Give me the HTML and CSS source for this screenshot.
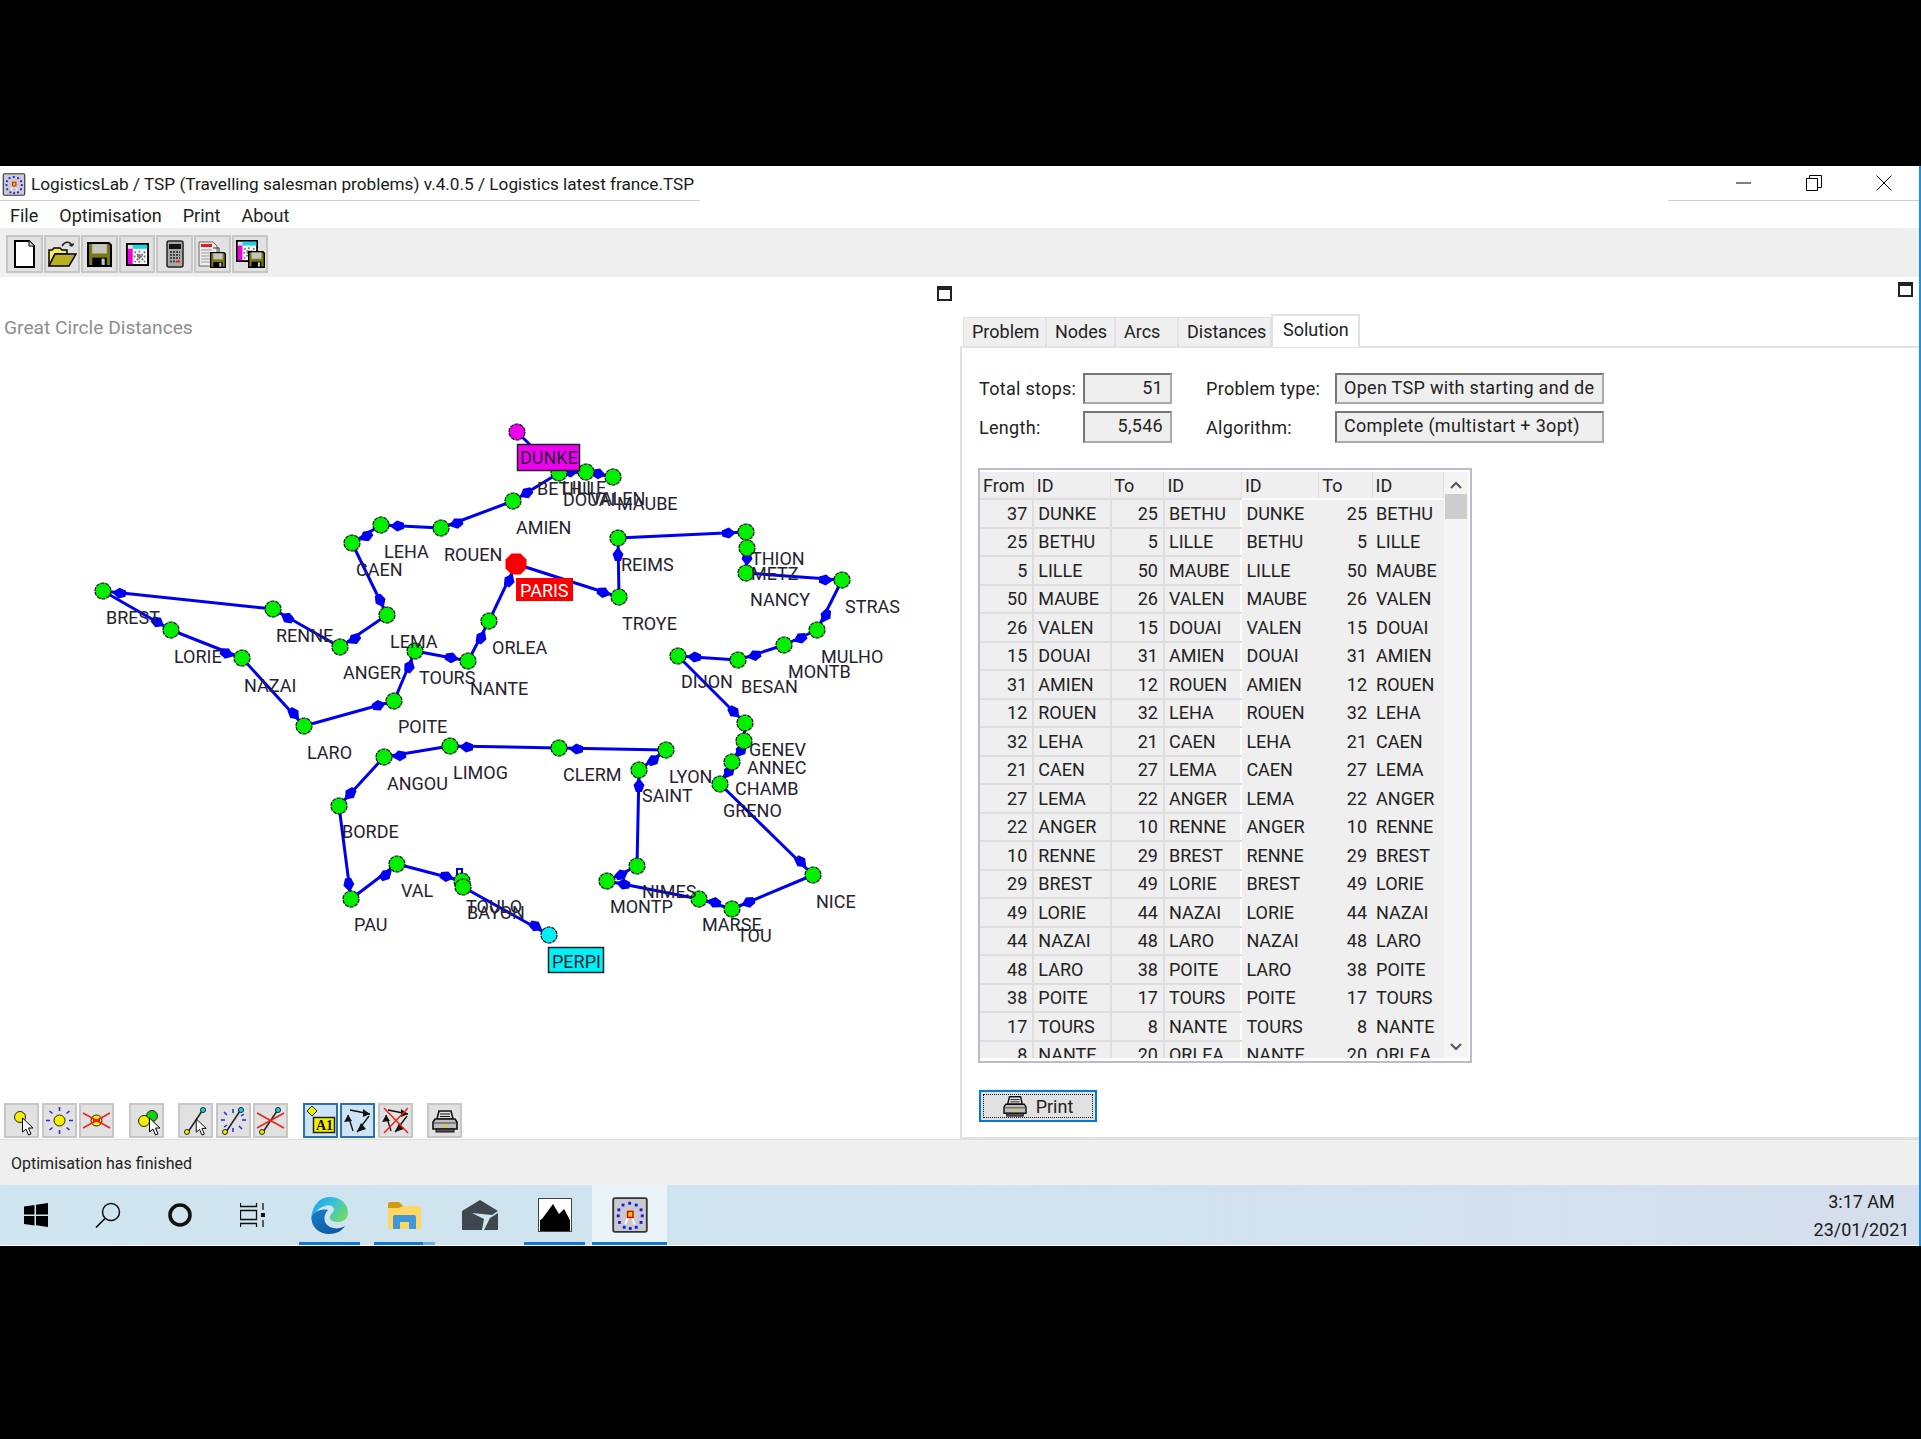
FILE: index.html
```html
<!DOCTYPE html>
<html lang="en">
<head>
    <meta charset="UTF-8">
    <title>LogisticsLab / TSP</title>
    <link rel="stylesheet" href="styles.css">
</head>
<body>
    <svg class="defs" width="0" height="0">
        <defs>
            <linearGradient id="edgeTop" x1="0" y1="0" x2="1" y2="0.6">
                <stop offset="0" stop-color="#1b9de2"/>
                <stop offset="0.5" stop-color="#33bfe0"/>
                <stop offset="1" stop-color="#6fd86c"/>
            </linearGradient>
            <linearGradient id="edgeLow" x1="0" y1="0" x2="1" y2="1">
                <stop offset="0" stop-color="#1a7fcc"/>
                <stop offset="1" stop-color="#0b4f98"/>
            </linearGradient>
            <symbol id="cursor" viewBox="0 0 12 19">
                <path d="M1 1V15L4.5 12L7 18L9.5 17L7 11H11.5Z" fill="#fff" stroke="#000" stroke-width="1"/>
            </symbol>
            <symbol id="floppy" viewBox="0 0 24 24">
                <path d="M1 1H21L23 3V23H1Z" fill="#7a7a10" stroke="#000" stroke-width="2"/>
                <rect x="5" y="2" width="14" height="9" fill="#c4c4c4"/>
                <rect x="5" y="15" width="14" height="8" fill="#000"/>
                <rect x="14" y="16" width="3" height="6" fill="#c4c4c4"/>
            </symbol>
            <symbol id="sheet" viewBox="0 0 24 24">
                <rect x="1" y="1" width="22" height="22" fill="#fff" stroke="#000" stroke-width="2"/>
                <rect x="2" y="2" width="20" height="4" fill="#e0e0e0"/>
                <rect x="7" y="2" width="15" height="4" fill="#12d8e8"/>
                <rect x="2" y="6" width="5" height="16" fill="#f000e0"/>
                <path d="M9 9L20 20M20 9L9 20M14 8V21M8 14H21" stroke="#777" stroke-width="2" stroke-dasharray="2 1.5"/>
            </symbol>
            <symbol id="printer" viewBox="0 0 26 24">
                <path d="M7 2H19L21 10H5Z" fill="#e6e6e6" stroke="#111" stroke-width="1.6"/>
                <path d="M8 5H18M8 7.500H18" stroke="#111"/>
                <path d="M3 10H23L25 13V20H1V13Z" fill="#bdbdbd" stroke="#111" stroke-width="1.6"/>
                <path d="M2 14H24" stroke="#444"/>
                <rect x="4" y="20" width="18" height="3" fill="#555" stroke="#111"/>
                <rect x="11" y="16" width="5" height="1.600" fill="#e6d200"/>
            </symbol>
            <symbol id="app" viewBox="0 0 30 30">
                <rect x="1" y="1" width="28" height="28" rx="1.500" fill="#c9c9cf" stroke="#333" stroke-width="1.500"/>
                <g fill="#1a1ae6">
                    <rect x="13.500" y="4" width="2.400" height="2.400"/><rect x="19" y="5.500" width="2.400" height="2.400"/>
                    <rect x="8" y="5.500" width="2.400" height="2.400"/><rect x="4.500" y="9.500" width="2.400" height="2.400"/>
                    <rect x="23" y="9.500" width="2.400" height="2.400"/><rect x="4" y="14.500" width="2.400" height="2.400"/>
                    <rect x="24" y="14.500" width="2.400" height="2.400"/><rect x="5" y="20" width="2.400" height="2.400"/>
                    <rect x="23" y="20" width="2.400" height="2.400"/><rect x="9" y="24" width="2.400" height="2.400"/>
                    <rect x="14" y="25" width="2.400" height="2.400"/><rect x="19" y="24" width="2.400" height="2.400"/>
                </g>
                <path d="M11 23L14 15M19 23L16 15" stroke="#fff" stroke-width="1.500"/>
                <rect x="13" y="12" width="4.500" height="5" fill="#f0d000" stroke="#e00000" stroke-width="1.200"/>
            </symbol>
            <path id="arrow" d="M-8 -3L-1 -5.500L6 0L-1 5.500L-8 3Z" fill="#0000f0"/>
        </defs>
    </svg>

    <div class="window">
        <div class="titlebar">
            <div class="title">
                <svg class="title-icon" width="24" height="23"><use href="#app"/></svg>
                <span>LogisticsLab / TSP (Travelling salesman problems) v.4.0.5 / Logistics latest france.TSP</span>
            </div>
            <div class="title-space"></div>
            <div class="controls">
                <div class="control"><svg width="16" height="16"><path d="M0 8H15" stroke="#000" fill="none"/></svg></div>
                <div class="control"><svg width="16" height="16"><path d="M.5 3.500H11.500V15.500H.5ZM3.500 3.500V.5H15.500V12.500H11.500" stroke="#000" fill="none"/></svg></div>
                <div class="control"><svg width="16" height="16"><path d="M.5 .5L15.500 15.500M15.500 .5L.5 15.500" stroke="#000" fill="none"/></svg></div>
            </div>
        </div>

        <div class="menubar">
            <span>File</span><span>Optimisation</span><span>Print</span><span>About</span>
        </div>

        <div class="toolbar">
            <div class="tool"><svg width="28" height="30" viewBox="0 0 28 30"><path d="M5 2H19L24 7V28H5Z" fill="#fff" stroke="#000" stroke-width="2"/><path d="M19 2V7H24" fill="#ddd" stroke="#000"/></svg></div>
            <div class="tool"><svg width="30" height="28" viewBox="0 0 30 28"><path d="M2 26V10H5L7 8H13L15 10H20V14H8L2 26" fill="#f0ee60" stroke="#000" stroke-width="1.500"/><path d="M2 26L8 14H29L22 26Z" fill="#b8b020" stroke="#000" stroke-width="1.500"/><path d="M15 6C18 1 23 1 25 6M25 6L22.500 5M25 6L26.500 3.500" fill="none" stroke="#222" stroke-width="1.500"/></svg></div>
            <div class="tool"><svg width="25" height="25"><use href="#floppy"/></svg></div>
            <div class="tool"><svg width="23" height="23"><use href="#sheet"/></svg></div>
            <div class="tool"><svg width="18" height="28" viewBox="0 0 18 28"><rect x="1" y="1" width="16" height="26" rx="2" fill="#a8a8a8" stroke="#222" stroke-width="1.500"/><rect x="3" y="4" width="12" height="5" fill="#111"/><path d="M4 12H14M4 15H14M4 18H14M4 21.500H10" stroke="#444" stroke-width="1.800" stroke-dasharray="2 1"/><rect x="10" y="20.500" width="4" height="2" fill="#e02020"/></svg></div>
            <div class="tool tool-stack"><svg width="30" height="28" viewBox="0 0 30 28"><path d="M2 2H16L20 6V26H2Z" fill="#eee" stroke="#666"/><rect x="4" y="4" width="11" height="3" fill="#f01818"/><path d="M4 10H15M4 13H13M4 16H13M4 19H13M4 22H13" stroke="#999"/><path d="M16 8H22V14" fill="none" stroke="#333"/><use href="#floppy" x="13" y="12" width="16" height="16"/></svg></div>
            <div class="tool tool-stack"><svg width="30" height="30" viewBox="0 0 30 30"><use href="#sheet" x="1" y="1" width="22" height="22"/><use href="#floppy" x="13" y="12" width="17" height="17"/></svg></div>
        </div>

        <div class="main">
            <div class="map-pane">
                <div class="max-box max-left"></div>
                <div class="map-caption">Great Circle Distances</div>

                <svg class="map" width="960" height="755" viewBox="0 340 960 755">
                    <polyline class="route" points="517,432 559,473 586,472 613,477 586,472 559,473 513,501 441,528 381,525 352,543 387,615 340,647 273,609 103,591 171,630 242,658 304,726 394,701 415,651 468,661 489,621 516,564 619,597 618,538 746,532 747,548 746,573 842,580 817,630 784,645 738,660 678,656 745,723 744,741 732,762 720,784 813,875 732,909 699,899 607,881 637,866 639,770 666,750 559,748 450,746 384,757 339,806 351,899 397,864 462,881 463,887 549,935"/>
                    <path class="route-thin" d="M457 876V869H462V876"/>

                    <use href="#arrow" transform="translate(572 472)"/>
                    <use href="#arrow" transform="translate(600 474) rotate(10)"/>
                    <use href="#arrow" transform="translate(525 494) rotate(149)"/>
                    <use href="#arrow" transform="translate(455 524) rotate(160)"/>
                    <use href="#arrow" transform="translate(396 526) rotate(178)"/>
                    <use href="#arrow" transform="translate(365 537) rotate(148)"/>
                    <use href="#arrow" transform="translate(381 602) rotate(64)"/>
                    <use href="#arrow" transform="translate(353 640) rotate(146)"/>
                    <use href="#arrow" transform="translate(286 617) rotate(210)"/>
                    <use href="#arrow" transform="translate(118 593) rotate(186)"/>
                    <use href="#arrow" transform="translate(159 623) rotate(30)"/>
                    <use href="#arrow" transform="translate(228 654) rotate(22)"/>
                    <use href="#arrow" transform="translate(295 715) rotate(48)"/>
                    <use href="#arrow" transform="translate(380 705) rotate(-16)"/>
                    <use href="#arrow" transform="translate(410 665) rotate(-68)"/>
                    <use href="#arrow" transform="translate(453 658) rotate(11)"/>
                    <use href="#arrow" transform="translate(482 636) rotate(-62)"/>
                    <use href="#arrow" transform="translate(510 579) rotate(-65)"/>
                    <use href="#arrow" transform="translate(605 593) rotate(18)"/>
                    <use href="#arrow" transform="translate(618 553) rotate(-90)"/>
                    <use href="#arrow" transform="translate(730 533) rotate(-3)"/>
                    <use href="#arrow" transform="translate(747 560) rotate(90)"/>
                    <use href="#arrow" transform="translate(827 580) rotate(4)"/>
                    <use href="#arrow" transform="translate(825 617) rotate(116)"/>
                    <use href="#arrow" transform="translate(799 639) rotate(156)"/>
                    <use href="#arrow" transform="translate(753 656) rotate(162)"/>
                    <use href="#arrow" transform="translate(693 657) rotate(184)"/>
                    <use href="#arrow" transform="translate(735 713) rotate(45)"/>
                    <use href="#arrow" transform="translate(740 752) rotate(120)"/>
                    <use href="#arrow" transform="translate(728 773) rotate(120)"/>
                    <use href="#arrow" transform="translate(802 863) rotate(44)"/>
                    <use href="#arrow" transform="translate(747 903) rotate(157)"/>
                    <use href="#arrow" transform="translate(713 902) rotate(197)"/>
                    <use href="#arrow" transform="translate(622 884) rotate(191)"/>
                    <use href="#arrow" transform="translate(623 874) rotate(-27)"/>
                    <use href="#arrow" transform="translate(639 784) rotate(-89)"/>
                    <use href="#arrow" transform="translate(655 759) rotate(-37)"/>
                    <use href="#arrow" transform="translate(575 749) rotate(181)"/>
                    <use href="#arrow" transform="translate(465 747) rotate(181)"/>
                    <use href="#arrow" transform="translate(398 756) rotate(170)"/>
                    <use href="#arrow" transform="translate(349 795) rotate(132)"/>
                    <use href="#arrow" transform="translate(349 886) rotate(83)"/>
                    <use href="#arrow" transform="translate(387 874) rotate(-37)"/>
                    <use href="#arrow" transform="translate(448 877) rotate(15)"/>
                    <use href="#arrow" transform="translate(537 927) rotate(29)"/>

                    <g class="nodes">
                        <circle cx="559" cy="473" r="8"/><circle cx="586" cy="472" r="8"/><circle cx="613" cy="477" r="8"/>
                        <circle cx="513" cy="501" r="8"/><circle cx="441" cy="528" r="8"/><circle cx="381" cy="525" r="8"/>
                        <circle cx="352" cy="543" r="8"/><circle cx="387" cy="615" r="8"/><circle cx="340" cy="647" r="8"/>
                        <circle cx="273" cy="609" r="8"/><circle cx="103" cy="591" r="8"/><circle cx="171" cy="630" r="8"/>
                        <circle cx="242" cy="658" r="8"/><circle cx="304" cy="726" r="8"/><circle cx="394" cy="701" r="8"/>
                        <circle cx="415" cy="651" r="8"/><circle cx="468" cy="661" r="8"/><circle cx="489" cy="621" r="8"/>
                        <circle cx="619" cy="597" r="8"/><circle cx="618" cy="538" r="8"/><circle cx="746" cy="532" r="8"/>
                        <circle cx="747" cy="548" r="8"/><circle cx="746" cy="573" r="8"/><circle cx="842" cy="580" r="8"/>
                        <circle cx="817" cy="630" r="8"/><circle cx="784" cy="645" r="8"/><circle cx="738" cy="660" r="8"/>
                        <circle cx="678" cy="656" r="8"/><circle cx="745" cy="723" r="8"/><circle cx="744" cy="741" r="8"/>
                        <circle cx="732" cy="762" r="8"/><circle cx="720" cy="784" r="8"/><circle cx="813" cy="875" r="8"/>
                        <circle cx="732" cy="909" r="8"/><circle cx="699" cy="899" r="8"/><circle cx="607" cy="881" r="8"/>
                        <circle cx="637" cy="866" r="8"/><circle cx="639" cy="770" r="8"/><circle cx="666" cy="750" r="8"/>
                        <circle cx="559" cy="748" r="8"/><circle cx="450" cy="746" r="8"/><circle cx="384" cy="757" r="8"/>
                        <circle cx="339" cy="806" r="8"/><circle cx="351" cy="899" r="8"/><circle cx="397" cy="864" r="8"/>
                        <circle cx="462" cy="881" r="8"/><circle cx="463" cy="887" r="8"/>
                    </g>
                    <circle class="node-start" cx="517" cy="432" r="8"/>
                    <circle class="node-end" cx="549" cy="935" r="8"/>
                    <polygon class="node-depot" points="511.500,553.500 520.500,553.500 526.500,559.500 526.500,568.500 520.500,574.500 511.500,574.500 505.500,568.500 505.500,559.500"/>

                    <g class="labels">
                        <text x="106" y="624">BREST</text><text x="276" y="642">RENNE</text><text x="384" y="558">LEHA</text>
                        <text x="356" y="576">CAEN</text><text x="444" y="561">ROUEN</text><text x="174" y="663">LORIE</text>
                        <text x="244" y="692">NAZAI</text><text x="390" y="648">LEMA</text><text x="343" y="679">ANGER</text>
                        <text x="419" y="684">TOURS</text><text x="470" y="695">NANTE</text><text x="398" y="733">POITE</text>
                        <text x="307" y="759">LARO</text><text x="537" y="495">BETHU</text><text x="562" y="494">LILLE</text>
                        <text x="563" y="506">DOUAI</text><text x="590" y="505">VALEN</text><text x="617" y="510">MAUBE</text>
                        <text x="516" y="534">AMIEN</text><text x="621" y="571">REIMS</text><text x="751" y="565">THION</text>
                        <text x="751" y="580">METZ</text><text x="750" y="606">NANCY</text><text x="845" y="613">STRAS</text>
                        <text x="622" y="630">TROYE</text><text x="492" y="654">ORLEA</text><text x="821" y="663">MULHO</text>
                        <text x="788" y="678">MONTB</text><text x="741" y="693">BESAN</text><text x="681" y="688">DIJON</text>
                        <text x="749" y="756">GENEV</text><text x="453" y="779">LIMOG</text><text x="387" y="790">ANGOU</text>
                        <text x="563" y="781">CLERM</text><text x="342" y="838">BORDE</text><text x="642" y="802">SAINT</text>
                        <text x="669" y="783">LYON</text><text x="723" y="817">GRENO</text><text x="401" y="897">VAL</text>
                        <text x="354" y="931">PAU</text><text x="466" y="913">TOULO</text><text x="467" y="919">BAYON</text>
                        <text x="642" y="898">NIMES</text><text x="610" y="913">MONTP</text><text x="702" y="931">MARSE</text>
                        <text x="747" y="774">ANNEC</text><text x="735" y="795">CHAMB</text><text x="816" y="908">NICE</text>
                        <text x="737" y="942">TOU</text>
                    </g>

                    <rect class="box-start" x="517.500" y="444.500" width="62" height="26"/>
                    <text class="box-text" x="520" y="464">DUNKE</text>
                    <rect class="box-depot" x="516" y="578" width="57" height="23"/>
                    <text class="box-text box-text-light" x="520" y="597">PARIS</text>
                    <rect class="box-end" x="548.500" y="947.500" width="55" height="25"/>
                    <text class="box-text" x="552" y="968">PERPI</text>
                </svg>

                <div class="map-tools">
                    <div class="map-group">
                        <div class="tool tool-small"><svg width="31" height="31" viewBox="0 0 31 31"><circle cx="14" cy="12" r="5.500" fill="#f4ee00" stroke="#222"/><use href="#cursor" x="15" y="12" width="13" height="19"/></svg></div>
                        <div class="tool tool-small"><svg width="31" height="31" viewBox="0 0 31 31"><circle cx="15.500" cy="15.500" r="5.500" fill="#f4ee00" stroke="#222"/><path d="M15.500 2V6M15.500 25V29M2 15.500H6M25 15.500H29M5.500 6L8.500 8.500M22.500 22.500L25.500 25M25.500 6L22.500 8.500M8.500 22.500L5.500 25" stroke="#2020f0" stroke-width="1.500"/></svg></div>
                        <div class="tool tool-small"><svg width="31" height="31" viewBox="0 0 31 31"><circle cx="15.500" cy="15.500" r="5.500" fill="#f4ee00" stroke="#222"/><path d="M2 8L29 23M2 23L29 8" stroke="#f02020" stroke-width="1.500"/><rect x="12" y="14" width="7" height="3" fill="#f02020"/></svg></div>
                    </div>
                    <div class="map-group">
                        <div class="tool tool-small"><svg width="31" height="31" viewBox="0 0 31 31"><circle cx="21" cy="11" r="5.500" fill="#10d010" stroke="#222"/><circle cx="13" cy="16" r="5.500" fill="#f4ee00" stroke="#222"/><use href="#cursor" x="17" y="12" width="13" height="19"/></svg></div>
                    </div>
                    <div class="map-group">
                        <div class="tool tool-small"><svg width="31" height="31" viewBox="0 0 31 31"><path d="M8 27L22 6" stroke="#222" stroke-width="1.500"/><circle cx="7" cy="27" r="2.500" fill="#f4ee00" stroke="#222"/><circle cx="23" cy="5" r="2.500" fill="#10d8e8" stroke="#222"/><use href="#cursor" x="15" y="13" width="12" height="18"/></svg></div>
                        <div class="tool tool-small"><svg width="31" height="31" viewBox="0 0 31 31"><path d="M8 27L22 6" stroke="#222" stroke-width="1.500"/><circle cx="7" cy="27" r="2.500" fill="#f4ee00" stroke="#222"/><circle cx="23" cy="5" r="2.500" fill="#10d8e8" stroke="#222"/><path d="M15 4V8M15 23V27M3 15H7M24 15H28M6 7L9 10M21 21L24 24M26 9L23 11M9 20L6 22" stroke="#2020f0" stroke-width="1.500"/></svg></div>
                        <div class="tool tool-small"><svg width="31" height="31" viewBox="0 0 31 31"><path d="M8 27L22 6" stroke="#222" stroke-width="1.500"/><circle cx="7" cy="27" r="2.500" fill="#f4ee00" stroke="#222"/><circle cx="23" cy="5" r="2.500" fill="#10d8e8" stroke="#222"/><path d="M2 8L29 23M2 23L29 8" stroke="#f02020" stroke-width="1.500"/></svg></div>
                    </div>
                    <div class="map-group">
                        <div class="tool tool-small tool-on"><svg width="31" height="31" viewBox="0 0 31 31"><path d="M7 1L12 6L7 11L2 6Z" fill="#f4ee00" stroke="#222"/><rect x="8.500" y="12.500" width="21" height="15" fill="#f4ee00" stroke="#222" stroke-width="1.500"/><text class="icon-text" x="11" y="25">A1</text></svg></div>
                        <div class="tool tool-small tool-on"><svg width="31" height="31" viewBox="0 0 31 31"><path d="M8 5L28 9M27 11L15 27M11 26L6 10" stroke="#111" stroke-width="1.300"/><path d="M28 9L21 4V12ZM15 27L24 24L19 18ZM6 10L2 17L10 16Z" fill="#111"/></svg></div>
                        <div class="tool tool-small"><svg width="31" height="31" viewBox="0 0 31 31"><path d="M8 5L28 9M27 11L15 27M11 26L6 10" stroke="#111" stroke-width="1.300"/><path d="M28 9L21 4V12ZM15 27L24 24L19 18ZM6 10L2 17L10 16Z" fill="#111"/><path d="M4 3L28 28M28 3L4 28" stroke="#f02020" stroke-width="1.500"/></svg></div>
                    </div>
                    <div class="map-group">
                        <div class="tool tool-small"><svg width="26" height="24"><use href="#printer"/></svg></div>
                    </div>
                </div>
            </div>

            <div class="side-pane">
                <div class="max-box max-right"></div>
                <div class="tabs">
                    <div class="tab tab-problem">Problem</div>
                    <div class="tab tab-nodes">Nodes</div>
                    <div class="tab tab-arcs">Arcs</div>
                    <div class="tab tab-distances">Distances</div>
                    <div class="tab tab-active">Solution</div>
                </div>
                <div class="panel">
                    <div class="summary">
                        <label>Total stops:</label>
                        <div class="field field-num">51</div>
                        <label class="label-gap">Problem type:</label>
                        <div class="field"><span class="clip">Open TSP with starting and destination</span></div>
                        <label>Length:</label>
                        <div class="field field-num">5,546</div>
                        <label class="label-gap">Algorithm:</label>
                        <div class="field"><span class="clip">Complete (multistart + 3opt)</span></div>
                    </div>

                    <div class="grid-box">
                        <div class="grid-clip">
                            <table class="grid">
                                <colgroup>
                                    <col class="c-num"><col class="c-id"><col class="c-num"><col class="c-id"><col class="c-id"><col class="c-num"><col class="c-id2">
                                </colgroup>
                                <thead>
                                    <tr><th>From</th><th>ID</th><th>To</th><th>ID</th><th>ID</th><th>To</th><th>ID</th></tr>
                                </thead>
                                <tbody>
                                    <tr><td>37</td><td>DUNKE</td><td>25</td><td>BETHU</td><td>DUNKE</td><td>25</td><td>BETHU</td></tr>
                                    <tr><td>25</td><td>BETHU</td><td>5</td><td>LILLE</td><td>BETHU</td><td>5</td><td>LILLE</td></tr>
                                    <tr><td>5</td><td>LILLE</td><td>50</td><td>MAUBE</td><td>LILLE</td><td>50</td><td>MAUBE</td></tr>
                                    <tr><td>50</td><td>MAUBE</td><td>26</td><td>VALEN</td><td>MAUBE</td><td>26</td><td>VALEN</td></tr>
                                    <tr><td>26</td><td>VALEN</td><td>15</td><td>DOUAI</td><td>VALEN</td><td>15</td><td>DOUAI</td></tr>
                                    <tr><td>15</td><td>DOUAI</td><td>31</td><td>AMIEN</td><td>DOUAI</td><td>31</td><td>AMIEN</td></tr>
                                    <tr><td>31</td><td>AMIEN</td><td>12</td><td>ROUEN</td><td>AMIEN</td><td>12</td><td>ROUEN</td></tr>
                                    <tr><td>12</td><td>ROUEN</td><td>32</td><td>LEHA</td><td>ROUEN</td><td>32</td><td>LEHA</td></tr>
                                    <tr><td>32</td><td>LEHA</td><td>21</td><td>CAEN</td><td>LEHA</td><td>21</td><td>CAEN</td></tr>
                                    <tr><td>21</td><td>CAEN</td><td>27</td><td>LEMA</td><td>CAEN</td><td>27</td><td>LEMA</td></tr>
                                    <tr><td>27</td><td>LEMA</td><td>22</td><td>ANGER</td><td>LEMA</td><td>22</td><td>ANGER</td></tr>
                                    <tr><td>22</td><td>ANGER</td><td>10</td><td>RENNE</td><td>ANGER</td><td>10</td><td>RENNE</td></tr>
                                    <tr><td>10</td><td>RENNE</td><td>29</td><td>BREST</td><td>RENNE</td><td>29</td><td>BREST</td></tr>
                                    <tr><td>29</td><td>BREST</td><td>49</td><td>LORIE</td><td>BREST</td><td>49</td><td>LORIE</td></tr>
                                    <tr><td>49</td><td>LORIE</td><td>44</td><td>NAZAI</td><td>LORIE</td><td>44</td><td>NAZAI</td></tr>
                                    <tr><td>44</td><td>NAZAI</td><td>48</td><td>LARO</td><td>NAZAI</td><td>48</td><td>LARO</td></tr>
                                    <tr><td>48</td><td>LARO</td><td>38</td><td>POITE</td><td>LARO</td><td>38</td><td>POITE</td></tr>
                                    <tr><td>38</td><td>POITE</td><td>17</td><td>TOURS</td><td>POITE</td><td>17</td><td>TOURS</td></tr>
                                    <tr><td>17</td><td>TOURS</td><td>8</td><td>NANTE</td><td>TOURS</td><td>8</td><td>NANTE</td></tr>
                                    <tr><td>8</td><td>NANTE</td><td>20</td><td>ORLEA</td><td>NANTE</td><td>20</td><td>ORLEA</td></tr>
                                </tbody>
                            </table>
                        </div>
                        <div class="scroll">
                            <svg class="chevron" width="12" height="8"><path d="M1 7L6 2L11 7" fill="none" stroke="#555" stroke-width="2"/></svg>
                            <div class="thumb"></div>
                            <div class="scroll-space"></div>
                            <svg class="chevron" width="12" height="8"><path d="M1 1L6 6L11 1" fill="none" stroke="#555" stroke-width="2"/></svg>
                        </div>
                    </div>

                    <button class="print-btn"><span class="print-inner"><svg width="24" height="22"><use href="#printer"/></svg>Print</span></button>
                </div>
            </div>
        </div>

        <div class="statusbar">Optimisation has finished</div>

        <div class="taskbar">
            <div class="sys-slot"><svg width="24" height="24" viewBox="0 0 24 24"><path d="M0 3.500L10.500 2V11.500H0ZM12 1.800L24 0V11.500H12ZM0 13H10.500V22.500L0 21ZM12 13H24V24L12 22.300Z" fill="#000"/></svg></div>
            <div class="sys-slot"><svg width="26" height="26" viewBox="0 0 26 26"><circle cx="16" cy="10" r="8.500" fill="none" stroke="#111" stroke-width="1.500"/><path d="M10 16.500L1 25.500" stroke="#111" stroke-width="1.700"/></svg></div>
            <div class="sys-slot"><svg width="24" height="24" viewBox="0 0 24 24"><circle cx="12" cy="12" r="10" fill="none" stroke="#111" stroke-width="3.600"/></svg></div>
            <div class="sys-slot"><svg width="25" height="24" viewBox="0 0 25 24"><path d="M.5 0V3.500H16.500V0M.5 24V20.500H16.500V24M.5 7.500H16.500V16.500H.5ZM23 0V7M23 17V24" fill="none" stroke="#111" stroke-width="1.300"/><rect x="21" y="10" width="4" height="4" fill="#111"/></svg></div>

            <div class="app-slot on">
                <svg width="38" height="37" viewBox="0 0 38 37"><path d="M19 0C30 0 37 7 37 16C37 22 32 25 27 25C22 25 18 23 19 19C20 16 25 14 22 10C18 6 8 9 3 18C2 19 1 21 .5 23C0 10 8 0 19 0Z" fill="url(#edgeTop)"/><path d="M.5 20C0 30 8 37 18 37C25 37 31 34 34 29C29 32 24 32 19 30C12 27 12 18 17 13C9 11 2 16 .5 20Z" fill="url(#edgeLow)"/></svg>
            </div>
            <div class="app-slot on half">
                <svg width="33" height="27" viewBox="0 0 33 27"><path d="M0 2Q0 0 2 0H11L15 4H31Q33 4 33 6V25Q33 27 31 27H2Q0 27 0 25Z" fill="#ffd767"/><path d="M0 6V2Q0 0 2 0H11L15 4L11 6Z" fill="#d19a11"/><path d="M5 27V15Q5 13 7 13H26Q28 13 28 15V27H21V20H12V27Z" fill="#3f96d9"/></svg>
            </div>
            <div class="app-slot">
                <svg width="36" height="30" viewBox="0 0 36 30"><path d="M0 11L18 0L36 11L30 15L10 13L22 19L20 30H0ZM36 13V30H22L28 18Z" fill="#3e474d"/></svg>
            </div>
            <div class="app-slot on">
                <svg width="34" height="34" viewBox="0 0 34 34"><rect x=".5" y=".5" width="33" height="33" fill="#fff" stroke="#444"/><rect x="2" y="3" width="30" height="30" fill="#000"/><path d="M2 3H32V22L26 11L21 16L15 6L4 21L2 22Z" fill="#fff"/></svg>
            </div>
            <div class="app-slot on active">
                <svg width="36" height="36"><use href="#app"/></svg>
            </div>

            <div class="task-space"></div>
            <div class="clock">
                <div>3:17 AM</div>
                <div>23/01/2021</div>
            </div>
        </div>
    </div>
</body>
</html>
```

FILE: styles.css
```css
* {
    box-sizing: border-box;
}
body {
    margin: 0;
    background: #000;
    font-family: Roboto, "Noto Sans", sans-serif;
    font-size: 18px;
    color: #222;
}
.defs {
    position: absolute;
}
.window {
    margin-top: 166px;
    margin-bottom: 193px;
    height: 1080px;
    background: #fff;
    border-right: 2px solid #1c8fe0;
    display: flex;
    flex-direction: column;
}

/* title bar */
.titlebar {
    height: 35px;
    display: flex;
}
.title {
    width: 700px;
    display: flex;
    align-items: center;
    gap: 5px;
    padding: 2px 0 0 2px;
    border-bottom: 1px solid #d0d0d0;
    font-size: 17.200px;
    white-space: nowrap;
    color: #1a1a1a;
}
.title-space {
    width: 968px;
}
.controls {
    flex: 1;
    display: flex;
    justify-content: flex-end;
    align-items: flex-start;
    border-bottom: 1px solid #d0d0d0;
}
.control {
    width: 70px;
    height: 34px;
    display: flex;
    justify-content: center;
    padding-top: 9px;
}
.menubar {
    height: 27px;
    display: flex;
    align-items: center;
    gap: 21px;
    padding: 2px 0 0 10px;
    font-size: 18px;
}
.toolbar {
    height: 49px;
    background: #efefef;
    display: flex;
    align-items: center;
    gap: 1px;
    padding: 3px 0 0 6px;
}
.tool {
    width: 36.600px;
    height: 38px;
    background: #e1e1e1;
    border: 2px solid #c6c6c6;
    display: flex;
    align-items: center;
    justify-content: center;
}

/* main area */
.main {
    height: 862px;
    display: flex;
}
.map-pane {
    width: 960px;
    position: relative;
}
.max-box {
    position: absolute;
    width: 15px;
    height: 15px;
    border: 2px solid #222;
    border-top-width: 4px;
    background: #fff;
}
.max-left {
    left: 937px;
    top: 9px;
}
.max-right {
    right: 6px;
    top: 5px;
}
.map-caption {
    padding: 39px 0 0 4px;
    height: 63px;
    line-height: 24px;
    font-size: 19.200px;
    color: #8e8e8e;
}
.map {
    display: block;
}
.route {
    fill: none;
    stroke: #0000f0;
    stroke-width: 3;
    stroke-linejoin: round;
}
.route-thin {
    fill: none;
    stroke: #0000f0;
    stroke-width: 2;
}
.nodes circle {
    fill: #00f000;
}
.nodes circle, .node-start, .node-end {
    stroke: #111;
    stroke-width: 1.2;
    stroke-dasharray: 4 1;
}
.node-start {
    fill: #f000f0;
}
.node-end {
    fill: #00f0f8;
}
.node-depot {
    fill: #f80000;
}
.labels text, .box-text {
    font-family: Roboto, sans-serif;
    font-size: 18px;
    fill: #262230;
}
.box-text-light {
    fill: #fff;
}
.box-start {
    fill: #f000f0;
    stroke: #222;
    stroke-width: 1.500;
}
.box-depot {
    fill: #f80000;
}
.box-end {
    fill: #00f0f8;
    stroke: #222;
    stroke-width: 1.500;
}
.icon-text {
    font-family: "Liberation Serif", serif;
    font-weight: bold;
    font-size: 14px;
    fill: #111;
}
.map-tools {
    display: flex;
    gap: 14.600px;
    padding: 8px 0 0 4px;
}
.map-group {
    display: flex;
    gap: 2.500px;
}
.tool-small {
    width: 35px;
    height: 35px;
}
.tool-on {
    background: #cde4f7;
    border-color: #2a72ad;
}

/* right side */
.side-pane {
    flex: 1;
    position: relative;
    display: flex;
    flex-direction: column;
    padding-top: 37px;
}
.tabs {
    display: flex;
    align-items: flex-end;
    height: 32px;
    margin-left: 3px;
    font-size: 18px;
}
.tab {
    height: 29px;
    background: #efefef;
    border: 1px solid #e2e2e2;
    border-bottom: 0;
    padding: 3px 0 0 8px;
    white-space: nowrap;
}
.tab-problem {
    width: 83px;
}
.tab-nodes {
    width: 69px;
}
.tab-arcs {
    width: 63px;
}
.tab-distances {
    width: 93px;
}
.tab-active {
    width: 89px;
    height: 33px;
    margin-bottom: -1px;
    padding-left: 10px;
    background: #fff;
    border: 2px solid #e2e2e2;
    border-bottom: 0;
    position: relative;
    z-index: 1;
}
.panel {
    flex: 1;
    border: 2px solid #e2e2e2;
    border-right: 0;
    padding: 25px 0 0 17px;
}
.summary {
    display: grid;
    grid-template-columns: 104px 89px 163px 269px;
    grid-template-rows: 31px 32px;
    row-gap: 7px;
    align-items: center;
    letter-spacing: 0.3px;
}
.label-gap {
    padding-left: 34px;
}
.field {
    height: 100%;
    background: #efefef;
    border: 2px solid;
    border-color: #777 #aaa #aaa #777;
    padding: 0 7px;
    line-height: 26px;
    overflow: hidden;
    white-space: nowrap;
}
.field-num {
    text-align: right;
}
.clip {
    display: block;
    overflow: hidden;
}
.grid-box {
    margin: 25px 0 0 -1px;
    width: 494px;
    height: 595px;
    border: 2px solid #b9bcc9;
    padding: 2px 2px 3px 0;
    display: flex;
}
.grid-clip {
    width: 464px;
    overflow: hidden;
}
.grid {
    table-layout: fixed;
    width: 464px;
    border-collapse: collapse;
    background: #efefef;
}
.c-num {
    width: 53px;
}
.c-id {
    width: 77px;
}
.c-id2 {
    width: 71px;
}
.grid th {
    height: 27px;
    padding: 0 0 0 3px;
    font-weight: normal;
    text-align: left;
    border-right: 1px solid #dedede;
    border-bottom: 2px solid #fff;
}
.grid th:nth-child(-n+4) {
    border-bottom-color: #dcdcdc;
}
.grid td {
    height: 28.500px;
    padding: 0 0 0 4px;
    white-space: nowrap;
}
.grid td:nth-child(-n+4) {
    border-right: 2px solid #dedede;
    border-bottom: 2px solid #dedede;
}
.grid td:nth-child(4) {
    border-right: 2px solid #fff;
}
.grid td:nth-child(1), .grid td:nth-child(3), .grid td:nth-child(6) {
    text-align: right;
    padding: 0 5px 0 0;
}
.scroll {
    flex: 1;
    background: #f4f4f4;
    display: flex;
    flex-direction: column;
    align-items: center;
    padding: 9px 0 7px;
}
.thumb {
    width: 22px;
    height: 25px;
    margin-top: 5px;
    background: #cdcdcd;
}
.scroll-space {
    flex: 1;
}
.chevron {
    display: block;
    flex: none;
}
.print-btn {
    display: block;
    margin: 27px 0 0 0;
    width: 118px;
    height: 32px;
    padding: 2px;
    background: #e1e1e1;
    border: 2px solid #0078d7;
    font: inherit;
    color: inherit;
}
.print-inner {
    display: flex;
    align-items: center;
    justify-content: center;
    gap: 9px;
    height: 100%;
    border: 1px dotted #111;
}

/* bottom */
.statusbar {
    height: 46px;
    background: #efefef;
    border-top: 1px solid #dedede;
    padding-left: 11px;
    line-height: 47px;
    font-size: 16px;
}
.taskbar {
    height: 60px;
    background: linear-gradient(90deg, #cfe5ef, #d0e2ee 60%, #d5deec);
    display: flex;
}
.sys-slot {
    width: 72px;
    display: flex;
    align-items: center;
    justify-content: center;
}
.sys-slot:nth-child(4) {
    margin-right: 4px;
}
.app-slot {
    width: 75px;
    display: flex;
    align-items: center;
    justify-content: center;
    position: relative;
}
.app-slot.on::after {
    content: "";
    position: absolute;
    left: 7px;
    right: 7px;
    bottom: 0;
    height: 3px;
    background: #0f78d4;
}
.app-slot.half::before {
    content: "";
    position: absolute;
    right: 7px;
    bottom: 0;
    width: 12px;
    height: 3px;
    background: #66aee4;
    z-index: 1;
}
.app-slot.active {
    background: #e9f3f8;
}
.app-slot.active::after {
    left: 0;
    right: 0;
}
.task-space {
    flex: 1;
}
.clock {
    width: 114px;
    padding-top: 3px;
    padding-right: 1px;
    text-align: center;
    font-size: 18px;
    line-height: 28px;
    color: #1a1a1a;
}
```
